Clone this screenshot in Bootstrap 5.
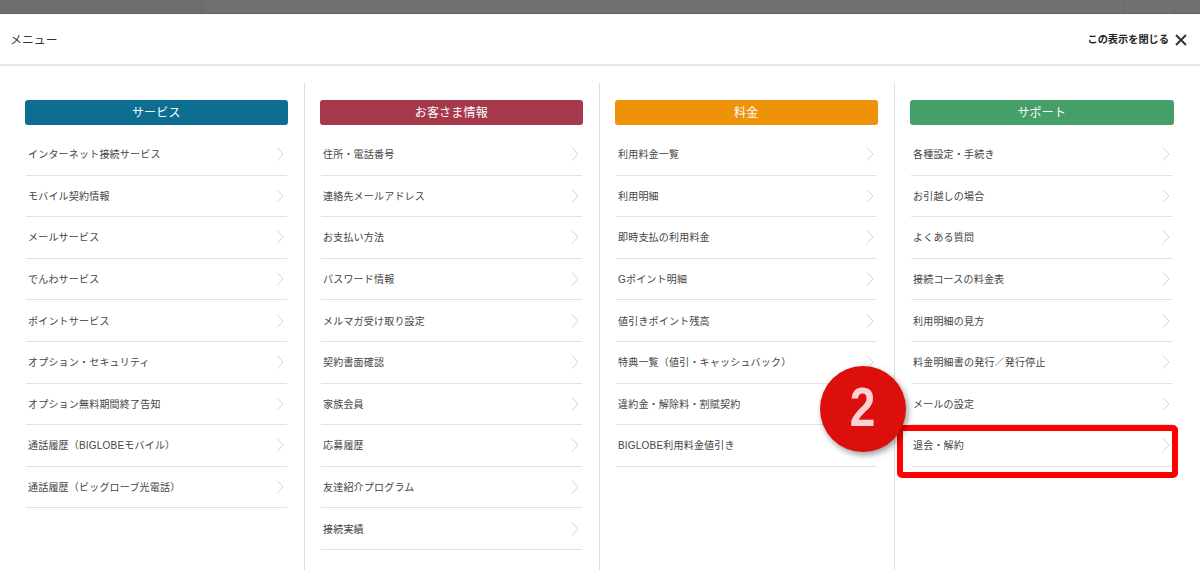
<!DOCTYPE html>
<html lang="ja">
<head>
  <meta charset="UTF-8" />
  <title>メニュー</title>
  <link href="https://cdn.jsdelivr.net/npm/bootstrap@5.3.3/dist/css/bootstrap.min.css" rel="stylesheet">
  <style>
    html, body { height: 570px; overflow: hidden; }
    body {
      position: relative;
      background: #fff;
      color: #444;
      font-family: "Liberation Sans", "Noto Sans CJK JP", sans-serif;
      font-size: 10px;
    }
    .top-band { height: 14px; background: #707070; border-bottom: 1px solid #5f5f5f; }
    .band-side { width: 205px; background: #6d6d6d; }
    .band-gap { width: 51px; border-left: 1px solid #666; margin-top: 4px; }
    .band-end { width: 26px; border-left: 1px solid #666; margin-top: 4px; }
    .menu-head { height: 52px; padding: 4px 13px 0 10px; border-bottom: 2px solid #e8e8e8; }
    .menu-title { font-size: 11.8px; color: #333; letter-spacing: .1px; }
    .close-text { font-size: 10.2px; font-weight: 700; color: #222; margin-top: -3px; }
    .close-wrap { gap: 6px; }
    .close-icon { margin-top: -2px; }
    .menu-cols { padding: 17px 10px 0; }
    .menu-col { width: 295.4px; height: 487px; padding: 17px 16px 0 14.6px; border-right: 1.5px solid #ddd; }
    .menu-col:last-child { border-right: 0; }
    .col-head {
      height: 25px; line-height: 26px; border-radius: 3px; color: #fff; text-align: center;
      font-size: 12px; letter-spacing: .2px; margin-bottom: 9px;
    }
    .head-blue { background: #0d6e92; }
    .head-red { background: #a5384b; }
    .head-orange { background: #ee9208; }
    .head-green { background: #459f68; }
    .menu-list { margin: 0 1px; }
    .menu-row {
      height: 41.6px; padding: 0 3px 0 2.4px; border-bottom: 1.5px solid #e2e2e2;
      color: #444; text-decoration: none; font-size: 10px; letter-spacing: .2px;
    }
    .menu-row span { padding-top: 1px; }
    .menu-row svg { flex: none; }
    .red-box {
      position: absolute; left: 897px; top: 425px; width: 281px; height: 53px;
      border: 6px solid #f00; border-radius: 5px;
    }
    .step-dot {
      position: absolute; left: 820px; top: 366px; width: 86px; height: 86px; border-radius: 50%;
      background: #dd0f0c; color: #fad2d2; box-shadow: 2px 3px 6px rgba(0,0,0,.4);
      font-family: "Liberation Sans", sans-serif; font-weight: 700; font-size: 56px;
    }
    .step-num { display: inline-block; transform: scaleX(.82); margin-top: -4px; }
  </style>
</head>
<body>

<div class="top-band d-flex">
  <div class="band-side"></div>
  <div class="flex-grow-1"></div>
  <div class="band-gap"></div>
  <div class="band-end"></div>
</div>

<div class="menu-head d-flex align-items-center justify-content-between">
  <span class="menu-title">メニュー</span>
  <span class="close-wrap d-flex align-items-center">
    <span class="close-text">この表示を閉じる</span>
    <svg class="close-icon" width="12" height="12" viewBox="0 0 12 12"><path d="M1 1 11 11M11 1 1 11" stroke="#333" stroke-width="2" fill="none"/></svg>
  </span>
</div>

<div class="menu-cols d-flex" id="cols"></div>

<div class="red-box"></div>
<div class="step-dot d-flex align-items-center justify-content-center"><span class="step-num">2</span></div>

<script src="https://cdn.jsdelivr.net/npm/bootstrap@5.3.3/dist/js/bootstrap.bundle.min.js"></script>
<script>
const menus = [
  ["サービス", "head-blue", ["インターネット接続サービス", "モバイル契約情報", "メールサービス", "でんわサービス", "ポイントサービス", "オプション・セキュリティ", "オプション無料期間終了告知", "通話履歴（BIGLOBEモバイル）", "通話履歴（ビッグローブ光電話）"]],
  ["お客さま情報", "head-red", ["住所・電話番号", "連絡先メールアドレス", "お支払い方法", "パスワード情報", "メルマガ受け取り設定", "契約書面確認", "家族会員", "応募履歴", "友達紹介プログラム", "接続実績"]],
  ["料金", "head-orange", ["利用料金一覧", "利用明細", "即時支払の利用料金", "Gポイント明細", "値引きポイント残高", "特典一覧（値引・キャッシュバック）", "違約金・解除料・割賦契約", "BIGLOBE利用料金値引き"]],
  ["サポート", "head-green", ["各種設定・手続き", "お引越しの場合", "よくある質問", "接続コースの料金表", "利用明細の見方", "料金明細書の発行／発行停止", "メールの設定", "退会・解約"]]
];

const chevron = '<svg width="8" height="14" viewBox="0 0 8 14"><path d="M1 .5 7 7 1 13.5" stroke="#d4d4d4" fill="none"/></svg>';

document.getElementById("cols").innerHTML = menus.map(m => `
  <div class="menu-col">
    <div class="col-head ${m[1]}">${m[0]}</div>
    <div class="menu-list">
      ${m[2].map(t => `<a href="#" class="menu-row d-flex align-items-center justify-content-between"><span>${t}</span>${chevron}</a>`).join("")}
    </div>
  </div>`).join("");
</script>
</body>
</html>
